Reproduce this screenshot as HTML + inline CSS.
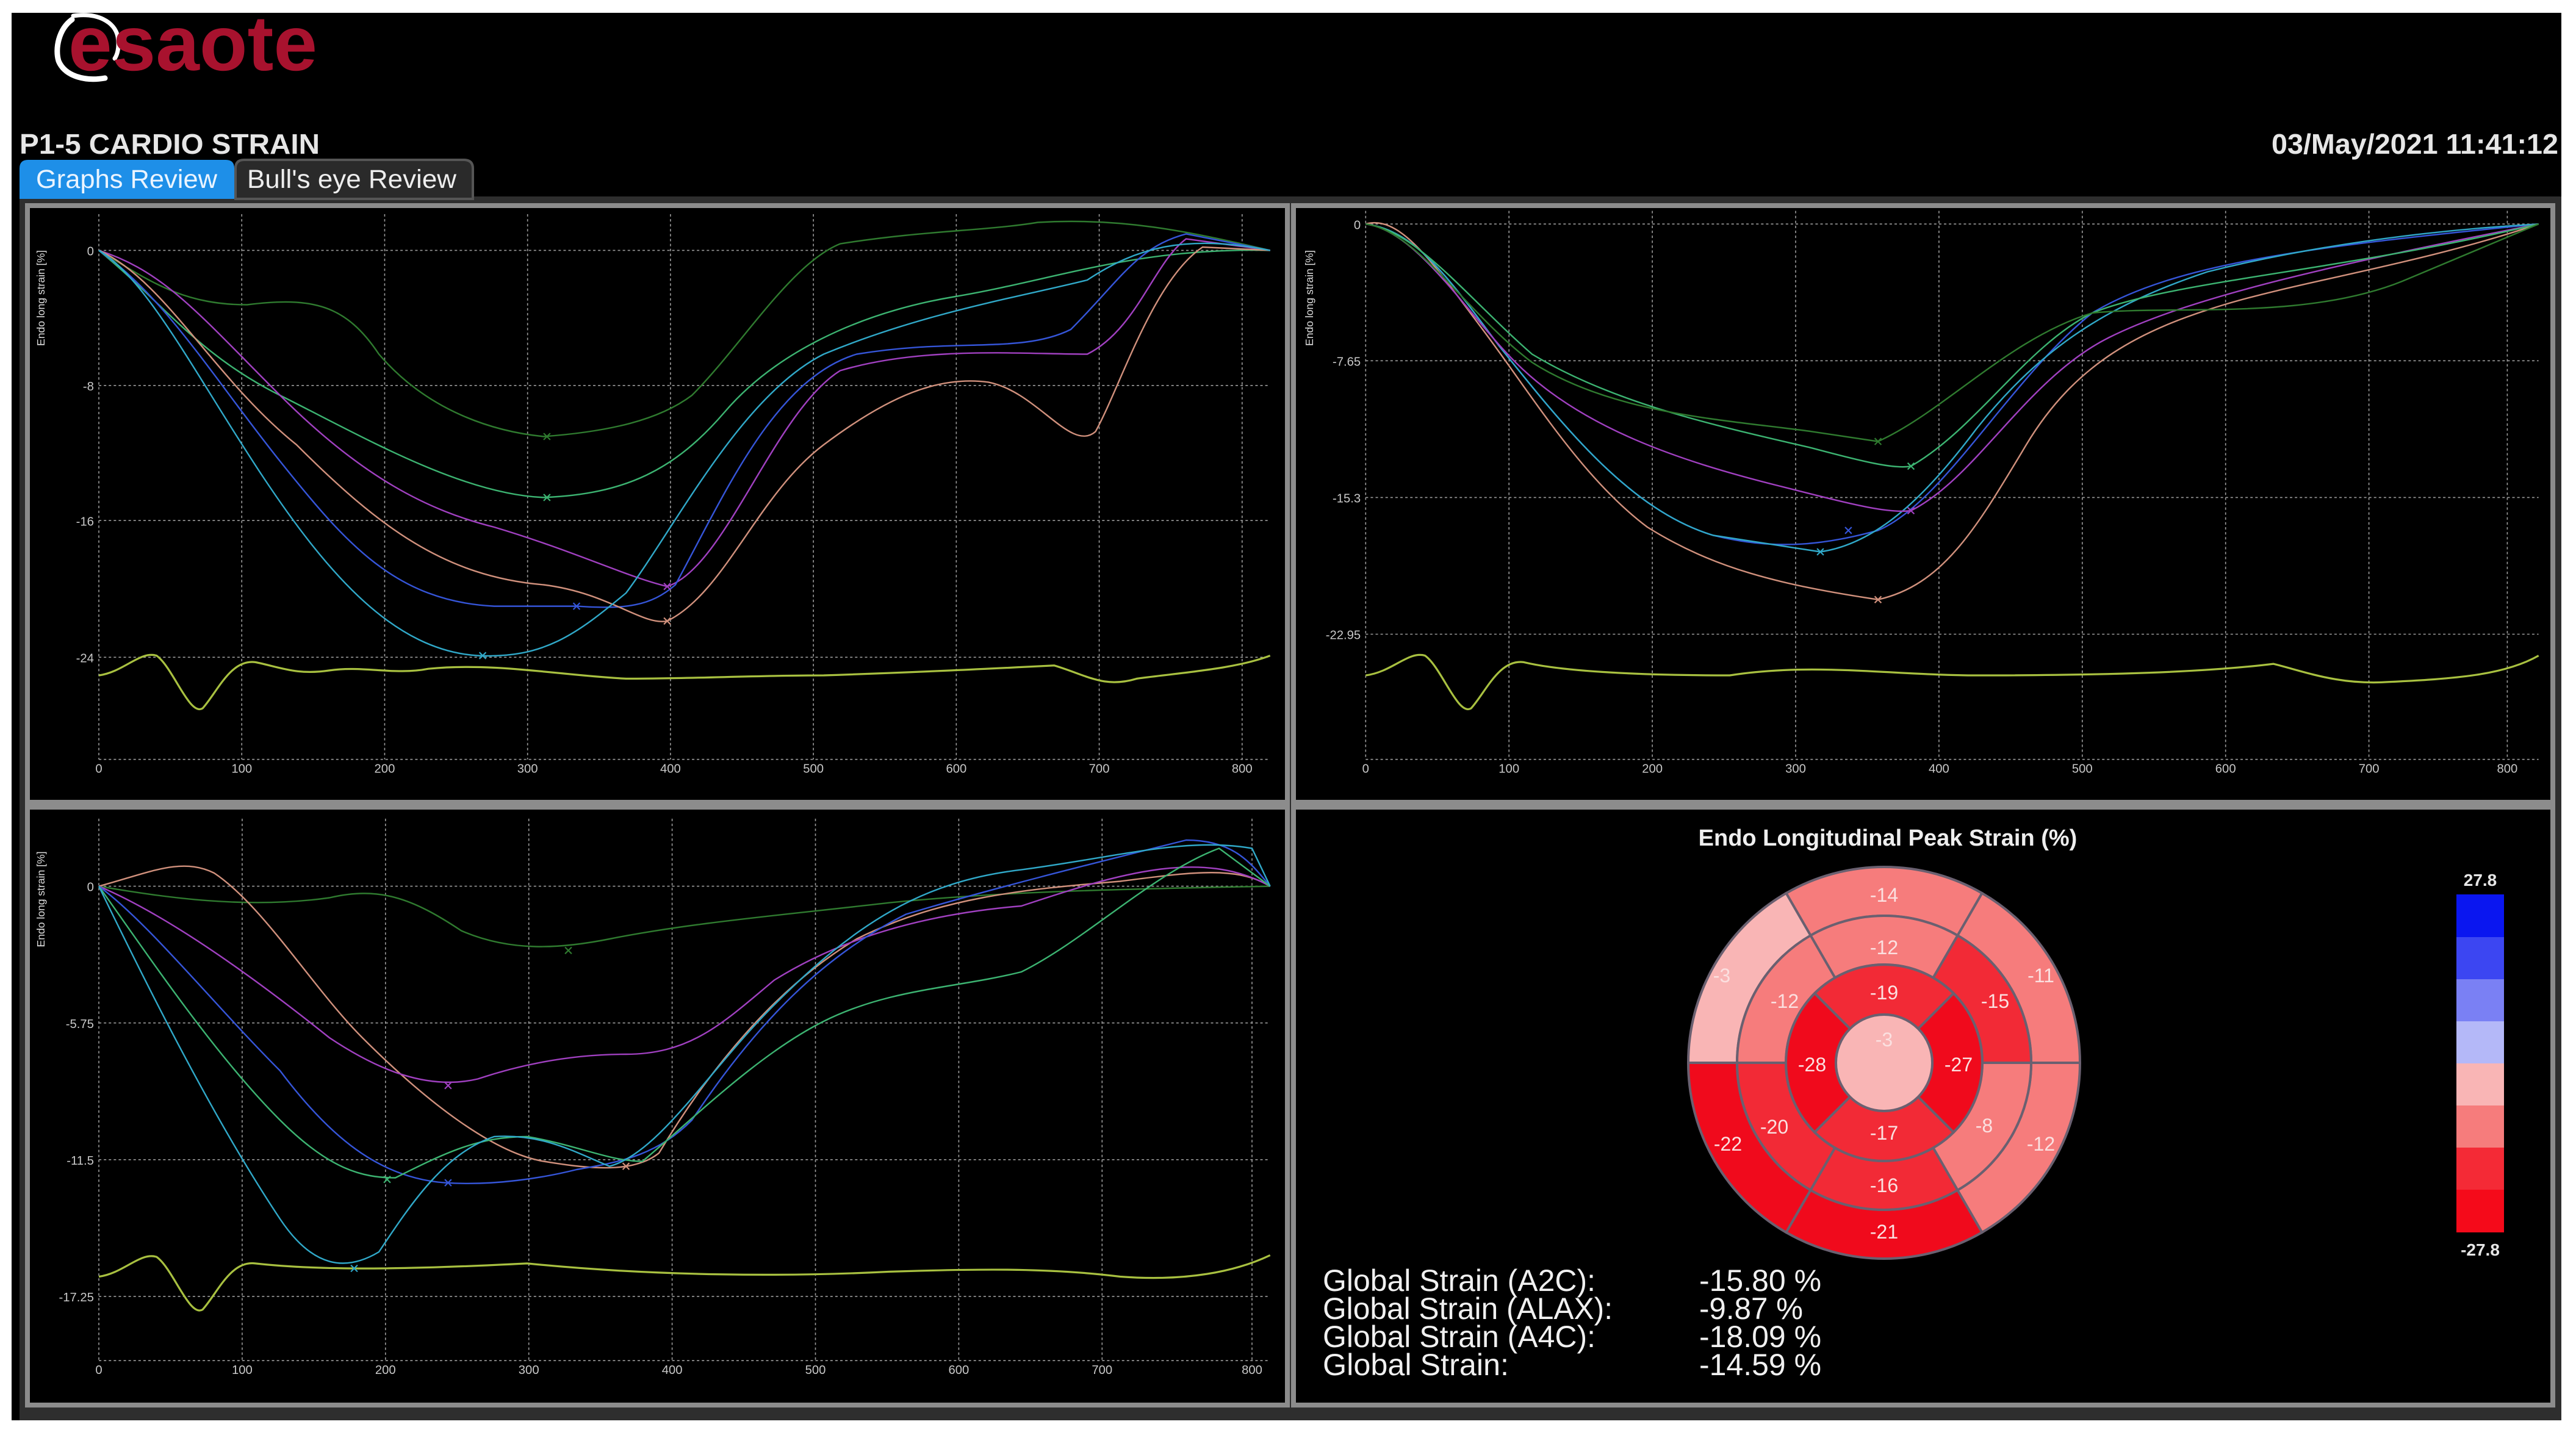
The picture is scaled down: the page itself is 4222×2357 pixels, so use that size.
<!DOCTYPE html>
<html><head><meta charset="utf-8"><style>
html,body{margin:0;padding:0;background:#fff;}
svg{display:block;}
text{font-family:"Liberation Sans",sans-serif;}
</style></head><body>
<svg width="4222" height="2357" viewBox="0 0 4222 2357" xmlns="http://www.w3.org/2000/svg">
<rect x="0" y="0" width="4222" height="2357" fill="#fff"/>
<rect x="19" y="21" width="4179" height="2307" fill="#000"/>
<!-- logo -->
<path d="M118,32 C96,48 90,80 96,100 C106,124 138,134 172,128" fill="none" stroke="#fff" stroke-width="9" stroke-linecap="round"/>
<path d="M120,26 C160,20 188,36 193,60 C196,78 192,90 188,96" fill="none" stroke="#fff" stroke-width="7" stroke-linecap="round"/>
<text x="112" y="115" font-size="128" font-weight="bold" fill="#a8122e" textLength="408" lengthAdjust="spacingAndGlyphs">esaote</text>
<!-- title & date -->
<text x="32" y="252" font-size="46" font-weight="bold" fill="#e6e6e6" textLength="492" lengthAdjust="spacingAndGlyphs">P1-5 CARDIO STRAIN</text>
<text x="4193" y="252" font-size="46" font-weight="bold" fill="#e6e6e6" text-anchor="end" textLength="470" lengthAdjust="spacingAndGlyphs">03/May/2021 11:41:12</text>
<!-- frame -->
<rect x="32" y="322" width="4166" height="2006" fill="#2e2e2e"/>
<!-- tabs -->
<path d="M386,326 L386,276 Q386,262 400,262 L760,262 Q775,262 775,276 L775,326 Z" fill="#2a2a2a" stroke="#555" stroke-width="4"/>
<path d="M32,326 L32,276 Q32,262 46,262 L370,262 Q384,262 384,276 L384,326 Z" fill="#1e8fe8"/>
<text x="59" y="308" font-size="43" fill="#eaf4ff" textLength="297" lengthAdjust="spacingAndGlyphs">Graphs Review</text>
<text x="405" y="308" font-size="43" fill="#eeeeee" textLength="343" lengthAdjust="spacingAndGlyphs">Bull's eye Review</text>
<!-- panels -->
<g fill="#000" stroke="#8c8c8c" stroke-width="8">
<rect x="45" y="337" width="2065" height="978"/>
<rect x="2120" y="337" width="2064" height="978"/>
<rect x="45" y="1323" width="2065" height="980"/>
<rect x="2120" y="1323" width="2064" height="980"/>
</g>

<g transform="scale(2.7)">
<!-- ===== TL plot ===== -->
<g stroke="#9a9a9a" stroke-width="0.6" stroke-dasharray="1.5,1.5" fill="none">
<path d="M60,130V461M146.75,130V461M233.5,130V461M320.25,130V461M407,130V461M493.75,130V461M580.5,130V461M667.25,130V461M754,130V461"/>
<path d="M60,152H771M60,234H771M60,316H771M60,399H771M60,461H771"/>
</g>
<g font-size="7.5" fill="#c8c8c8" text-anchor="end">
<text x="57" y="155">0</text><text x="57" y="237">-8</text><text x="57" y="319">-16</text><text x="57" y="402">-24</text>
</g>
<g font-size="7.5" fill="#c8c8c8" text-anchor="middle">
<text x="60" y="469">0</text><text x="146.75" y="469">100</text><text x="233.5" y="469">200</text><text x="320.25" y="469">300</text><text x="407" y="469">400</text><text x="493.75" y="469">500</text><text x="580.5" y="469">600</text><text x="667.25" y="469">700</text><text x="754" y="469">800</text>
</g>
<text transform="translate(27,210) rotate(-90)" font-size="6.5" fill="#ddd">Endo long strain [%]</text>
<g fill="none" stroke-width="0.9">
<path stroke="#2f7a2f" d="M60,152 C90,170 110,185 150,185 C190,180 210,185 230,215 C260,250 300,262 330,265 C370,262 400,255 420,240 C450,210 480,160 510,148 C560,140 600,140 630,135 C680,132 720,140 771,152"/>
<path stroke="#3cb371" d="M60,152 C100,185 120,215 170,240 C220,265 280,300 330,302 C380,300 410,285 440,250 C470,215 520,190 580,180 C640,170 690,150 771,152"/>
<path stroke="#a040c0" d="M60,152 C100,165 120,190 170,240 C220,290 260,310 300,320 C350,335 380,350 405,356 C440,345 470,250 510,225 C560,210 620,215 660,215 C690,200 700,160 720,145 L771,152"/>
<path stroke="#3555d8" d="M60,152 C100,180 130,230 170,280 C210,330 240,365 300,368 L350,368 C380,370 395,368 410,355 C440,300 470,230 520,215 C580,205 620,215 650,200 C680,170 690,150 720,142 L771,152"/>
<path stroke="#d0907c" d="M60,152 C100,170 130,230 180,270 C230,320 270,350 330,355 C370,360 390,380 405,377 C440,360 460,300 500,270 C540,240 570,228 600,232 C630,238 650,275 665,262 C680,235 700,170 730,150 L771,152"/>
<path stroke="#30a8c8" d="M60,152 C90,170 120,230 160,290 C200,350 240,395 290,398 C330,400 350,385 380,360 C410,320 450,240 500,215 C560,190 620,180 660,170 C690,150 720,142 771,152"/>
<path stroke="#a8c040" stroke-width="1.2" d="M60,410 C75,408 85,395 95,398 C105,405 115,435 123,430 C132,420 140,400 155,402 C170,405 180,410 200,407 C220,404 240,410 260,406 C300,402 340,410 380,412 C420,412 460,410 500,410 C560,408 600,406 640,404 C660,410 670,418 690,412 C720,408 750,406 771,398"/>
</g>
<!-- ===== TR plot ===== -->
<g stroke="#9a9a9a" stroke-width="0.6" stroke-dasharray="1.5,1.5" fill="none">
<path d="M829,128V461M916,128V461M1003,128V461M1090,128V461M1177,128V461M1264,128V461M1351,128V461M1438,128V461M1522,128V461"/>
<path d="M829,136H1541M829,219H1541M829,302H1541M829,385H1541M829,461H1541"/>
</g>
<g font-size="7.5" fill="#c8c8c8" text-anchor="end">
<text x="826" y="139">0</text><text x="826" y="222">-7.65</text><text x="826" y="305">-15.3</text><text x="826" y="388">-22.95</text>
</g>
<g font-size="7.5" fill="#c8c8c8" text-anchor="middle">
<text x="829" y="469">0</text><text x="916" y="469">100</text><text x="1003" y="469">200</text><text x="1090" y="469">300</text><text x="1177" y="469">400</text><text x="1264" y="469">500</text><text x="1351" y="469">600</text><text x="1438" y="469">700</text><text x="1522" y="469">800</text>
</g>
<text transform="translate(797,210) rotate(-90)" font-size="6.5" fill="#ddd">Endo long strain [%]</text>
<g fill="none" stroke-width="0.9">
<path stroke="#d0907c" d="M829,136 C850,130 870,160 900,200 C930,240 960,290 1000,320 C1040,345 1080,355 1140,364 C1180,355 1200,320 1230,270 C1260,220 1300,200 1350,185 C1400,170 1470,160 1541,136"/>
<path stroke="#3555d8" d="M829,136 C860,140 880,170 910,210 C950,260 990,310 1040,325 C1080,335 1110,330 1140,322 C1180,305 1220,230 1270,190 C1320,160 1400,150 1541,136"/>
<path stroke="#30a8c8" d="M829,136 C860,140 880,170 910,210 C950,260 990,310 1040,325 L1105,335 C1140,330 1170,300 1200,260 C1240,210 1280,185 1340,165 C1400,150 1470,140 1541,136"/>
<path stroke="#a040c0" d="M829,136 C860,140 890,190 920,220 C960,260 1020,280 1080,295 C1120,305 1145,312 1160,310 C1200,290 1230,230 1280,205 C1330,180 1420,160 1541,136"/>
<path stroke="#3cb371" d="M829,136 C860,140 890,180 930,215 C980,245 1040,258 1100,272 C1130,280 1150,285 1160,283 C1200,260 1230,210 1270,190 C1320,170 1420,165 1541,136"/>
<path stroke="#2f7a2f" d="M829,136 C860,140 890,190 930,220 C980,252 1050,255 1100,262 L1140,268 C1180,250 1220,205 1270,190 C1320,185 1400,195 1460,170 L1541,136"/>
<path stroke="#a8c040" stroke-width="1.2" d="M829,410 C845,408 855,395 865,398 C875,405 885,435 893,430 C902,420 910,400 925,402 C950,408 1000,410 1050,410 C1100,402 1150,410 1200,410 C1280,410 1340,408 1380,403 C1400,408 1420,416 1450,414 C1490,412 1520,410 1541,398"/>
</g>
<!-- ===== BL plot ===== -->
<g stroke="#9a9a9a" stroke-width="0.6" stroke-dasharray="1.5,1.5" fill="none">
<path d="M60,497V826M147,497V826M234,497V826M321,497V826M408,497V826M495,497V826M582,497V826M669,497V826M760,497V826"/>
<path d="M60,538H771M60,621H771M60,704H771M60,787H771M60,826H771"/>
</g>
<g font-size="7.5" fill="#c8c8c8" text-anchor="end">
<text x="57" y="541">0</text><text x="57" y="624">-5.75</text><text x="57" y="707">-11.5</text><text x="57" y="790">-17.25</text>
</g>
<g font-size="7.5" fill="#c8c8c8" text-anchor="middle">
<text x="60" y="834">0</text><text x="147" y="834">100</text><text x="234" y="834">200</text><text x="321" y="834">300</text><text x="408" y="834">400</text><text x="495" y="834">500</text><text x="582" y="834">600</text><text x="669" y="834">700</text><text x="760" y="834">800</text>
</g>
<text transform="translate(27,575) rotate(-90)" font-size="6.5" fill="#ddd">Endo long strain [%]</text>
<g fill="none" stroke-width="0.9">
<path stroke="#2f7a2f" d="M60,538 C100,545 150,552 200,545 C230,538 250,545 280,565 C310,578 340,576 370,570 C420,560 480,555 540,548 C600,542 660,540 771,538"/>
<path stroke="#d0907c" d="M60,538 C90,530 110,520 130,530 C160,550 190,600 220,630 C260,670 300,700 330,705 C360,710 385,712 400,700 C430,650 470,600 520,570 C570,545 620,540 680,535 C720,530 750,525 771,538"/>
<path stroke="#a040c0" d="M60,538 C100,555 150,590 200,630 C230,650 260,662 290,655 C320,645 350,640 380,640 C420,640 440,620 470,595 C510,570 560,555 620,550 C680,530 730,515 771,538"/>
<path stroke="#3555d8" d="M60,538 C90,560 130,610 170,650 C200,690 230,715 270,718 C300,720 330,715 350,710 C380,705 400,700 420,680 C460,620 500,580 550,555 C600,540 660,525 720,510 C750,510 760,525 771,538"/>
<path stroke="#3cb371" d="M60,538 C90,580 130,640 170,680 C200,710 220,715 240,715 C270,700 290,690 320,690 C350,695 370,705 390,705 C420,680 460,640 500,620 C540,600 580,600 620,590 C660,570 700,530 740,515 L771,538"/>
<path stroke="#30a8c8" d="M60,538 C90,600 130,680 170,740 C190,770 210,772 230,760 C250,730 270,700 300,690 C330,688 350,700 370,708 C400,700 430,650 470,610 C520,560 560,535 620,528 C680,520 720,508 760,515 L771,538"/>
<path stroke="#a8c040" stroke-width="1.2" d="M60,775 C75,773 85,760 95,763 C105,770 115,800 123,795 C132,785 140,765 155,767 C200,772 260,770 320,767 C400,775 480,775 540,772 C600,770 640,770 680,775 C720,778 750,772 771,762"/>
</g>
<!-- markers -->
<g stroke-width="0.8" fill="none">
<path stroke="#2f7a2f" d="M330,263l4,4m0,-4l-4,4M1138,266l4,4m0,-4l-4,4M343,575l4,4m0,-4l-4,4"/>
<path stroke="#3cb371" d="M330,300l4,4m0,-4l-4,4M1158,281l4,4m0,-4l-4,4M233,714l4,4m0,-4l-4,4"/>
<path stroke="#a040c0" d="M403,354l4,4m0,-4l-4,4M1158,308l4,4m0,-4l-4,4M270,657l4,4m0,-4l-4,4"/>
<path stroke="#3555d8" d="M348,366l4,4m0,-4l-4,4M1120,320l4,4m0,-4l-4,4M270,716l4,4m0,-4l-4,4"/>
<path stroke="#d0907c" d="M403,375l4,4m0,-4l-4,4M1138,362l4,4m0,-4l-4,4M378,706l4,4m0,-4l-4,4"/>
<path stroke="#30a8c8" d="M291,396l4,4m0,-4l-4,4M1103,333l4,4m0,-4l-4,4M213,768l4,4m0,-4l-4,4"/>
</g>
</g>

<!-- ===== Bull's eye ===== -->
<text x="3094" y="1386" font-size="38" font-weight="bold" fill="#eeeeee" text-anchor="middle">Endo Longitudinal Peak Strain (%)</text>
<g transform="translate(3088,1742)" stroke="#6a6070" stroke-width="4">
<path fill="#f67c7c" d="M160.5,-278 A321,321 0 0 0 -160.5,-278 L-120.5,-208.7 A241,241 0 0 1 120.5,-208.7 Z"/>
<path fill="#f9b5b5" d="M-160.5,-278 A321,321 0 0 0 -321,0 L-241,0 A241,241 0 0 1 -120.5,-208.7 Z"/>
<path fill="#f00a1c" d="M-321,0 A321,321 0 0 0 -160.5,278 L-120.5,208.7 A241,241 0 0 1 -241,0 Z"/>
<path fill="#f00a1c" d="M-160.5,278 A321,321 0 0 0 160.5,278 L120.5,208.7 A241,241 0 0 1 -120.5,208.7 Z"/>
<path fill="#f67c7c" d="M160.5,278 A321,321 0 0 0 321,0 L241,0 A241,241 0 0 1 120.5,208.7 Z"/>
<path fill="#f67c7c" d="M321,0 A321,321 0 0 0 160.5,-278 L120.5,-208.7 A241,241 0 0 1 241,0 Z"/>
<path fill="#f67c7c" d="M120.5,-208.7 A241,241 0 0 0 -120.5,-208.7 L-80.5,-139.4 A161,161 0 0 1 80.5,-139.4 Z"/>
<path fill="#f67c7c" d="M-120.5,-208.7 A241,241 0 0 0 -241,0 L-161,0 A161,161 0 0 1 -80.5,-139.4 Z"/>
<path fill="#f22a36" d="M-241,0 A241,241 0 0 0 -120.5,208.7 L-80.5,139.4 A161,161 0 0 1 -161,0 Z"/>
<path fill="#f22a36" d="M-120.5,208.7 A241,241 0 0 0 120.5,208.7 L80.5,139.4 A161,161 0 0 1 -80.5,139.4 Z"/>
<path fill="#f67c7c" d="M120.5,208.7 A241,241 0 0 0 241,0 L161,0 A161,161 0 0 1 80.5,139.4 Z"/>
<path fill="#f22a36" d="M241,0 A241,241 0 0 0 120.5,-208.7 L80.5,-139.4 A161,161 0 0 1 161,0 Z"/>
<path fill="#f22a36" d="M113.8,-113.8 A161,161 0 0 0 -113.8,-113.8 L-55.9,-55.9 A79,79 0 0 1 55.9,-55.9 Z"/>
<path fill="#f00a1c" d="M-113.8,-113.8 A161,161 0 0 0 -113.8,113.8 L-55.9,55.9 A79,79 0 0 1 -55.9,-55.9 Z"/>
<path fill="#f22a36" d="M-113.8,113.8 A161,161 0 0 0 113.8,113.8 L55.9,55.9 A79,79 0 0 1 -55.9,55.9 Z"/>
<path fill="#f00a1c" d="M113.8,113.8 A161,161 0 0 0 113.8,-113.8 L55.9,-55.9 A79,79 0 0 1 55.9,55.9 Z"/>
<circle r="79" fill="#f9b5b5"/>
</g>
<g font-size="32" fill="#fbe0e0" text-anchor="middle">
<text x="3088" y="1478">-14</text>
<text x="3088" y="1564">-12</text>
<text x="3088" y="1638">-19</text>
<text x="3088" y="1715">-3</text>
<text x="2970" y="1756">-28</text>
<text x="3210" y="1756">-27</text>
<text x="3088" y="1868">-17</text>
<text x="3088" y="1954">-16</text>
<text x="3088" y="2030">-21</text>
<text x="2925" y="1652">-12</text>
<text x="3270" y="1652">-15</text>
<text x="2908" y="1858">-20</text>
<text x="3252" y="1856">-8</text>
<text x="2822" y="1610">-3</text>
<text x="3345" y="1610">-11</text>
<text x="2832" y="1886">-22</text>
<text x="3345" y="1886">-12</text>
</g>
<!-- colour bar -->
<g stroke="none">
<rect x="4026" y="1466" width="78" height="70" fill="#0a16f0"/>
<rect x="4026" y="1536" width="78" height="69" fill="#3c46f2"/>
<rect x="4026" y="1605" width="78" height="69" fill="#7a80f4"/>
<rect x="4026" y="1674" width="78" height="69" fill="#b4b8f8"/>
<rect x="4026" y="1743" width="78" height="69" fill="#f9b5b5"/>
<rect x="4026" y="1812" width="78" height="69" fill="#f67c7c"/>
<rect x="4026" y="1881" width="78" height="69" fill="#f42a36"/>
<rect x="4026" y="1950" width="78" height="70" fill="#f50a1a"/>
</g>
<text x="4065" y="1452" font-size="28" font-weight="bold" fill="#e6e6e6" text-anchor="middle">27.8</text>
<text x="4065" y="2058" font-size="28" font-weight="bold" fill="#e6e6e6" text-anchor="middle">-27.8</text>
<!-- global strain -->
<g font-size="50" fill="#f0f0f0">
<text x="2168" y="2116" textLength="447" lengthAdjust="spacingAndGlyphs">Global Strain (A2C):</text>
<text x="2168" y="2162" textLength="475" lengthAdjust="spacingAndGlyphs">Global Strain (ALAX):</text>
<text x="2168" y="2208" textLength="447" lengthAdjust="spacingAndGlyphs">Global Strain (A4C):</text>
<text x="2168" y="2254" textLength="305" lengthAdjust="spacingAndGlyphs">Global Strain:</text>
<text x="2785" y="2116" textLength="200" lengthAdjust="spacingAndGlyphs">-15.80 %</text>
<text x="2785" y="2162" textLength="170" lengthAdjust="spacingAndGlyphs">-9.87 %</text>
<text x="2785" y="2208" textLength="200" lengthAdjust="spacingAndGlyphs">-18.09 %</text>
<text x="2785" y="2254" textLength="200" lengthAdjust="spacingAndGlyphs">-14.59 %</text>
</g>
</svg>
</body></html>
